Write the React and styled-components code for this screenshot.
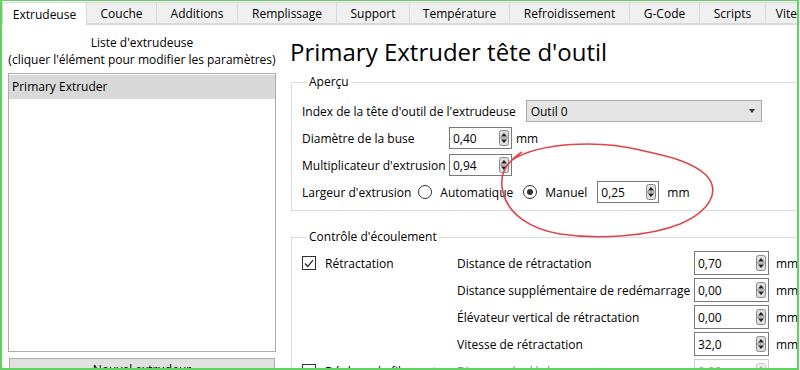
import React from 'react';
import styled, { createGlobalStyle } from 'styled-components';

const Global = createGlobalStyle`
  html, body { margin: 0; padding: 0; background: #fff; }
  body {
    font-family: "Open Sans", "Noto Sans", sans-serif;
    font-size: 12px;
    color: #000;
  }
  * { box-sizing: border-box; }
`;

const Frame = styled.div`
  position: relative;
  width: 799px;
  height: 370px;
  border: 2px solid #5ed45e;
  border-top-width: 1px;
  overflow: hidden;
  background: #fff;
  display: flex;
  flex-direction: column;
`;

const TabBar = styled.div`
  display: flex;
  align-items: flex-end;
  height: 24px;
  padding-top: 2px;
  border-bottom: 1px solid #d9d9d9;
  flex: none;
`;

const Tab = styled.div`
  flex: none;
  width: ${p => p.$w}px;
  height: ${p => (p.$active ? 23 : 22)}px;
  margin-bottom: ${p => (p.$active ? -1 : 0)}px;
  display: flex;
  align-items: center;
  justify-content: center;
  white-space: nowrap;
  overflow: hidden;
  background: ${p => (p.$active ? '#fff' : '#f0f0f0')};
  border: 1px solid #d9d9d9;
  border-left: ${p => (p.$first ? '1px solid #d9d9d9' : 'none')};
  border-bottom: ${p => (p.$active ? 'none' : '1px solid #d9d9d9')};
  color: #000;
  padding-top: 1px;
`;

const Body = styled.div`
  flex: 1;
  display: flex;
  padding-left: 6px;
  min-height: 0;
`;

const LeftPanel = styled.div`
  width: 268px;
  flex: none;
  display: flex;
  flex-direction: column;
  padding-top: 9px;
`;

const ListTitle = styled.div`
  text-align: center;
  line-height: 17px;
  white-space: nowrap;
`;

const ListBox = styled.div`
  margin-top: 5px;
  height: 279px;
  border: 1px solid #adadad;
  padding: 1px 0 0 0;
  flex: none;
`;

const ListItem = styled.div`
  height: 24px;
  line-height: 24px;
  padding-left: 3px;
  background: ${p => (p.$selected ? '#d9d9d9' : 'transparent')};
`;

const PushButton = styled.div`
  margin-top: 6px;
  margin-left: 1px;
  width: 266px;
  height: 23px;
  background: #e1e1e1;
  border: 1px solid #adadad;
  text-align: center;
  line-height: 21px;
  flex: none;
`;

const RightPanel = styled.div`
  flex: 1;
  margin-left: 14px;
  margin-right: -14px;
  display: flex;
  flex-direction: column;
`;

const Title = styled.h1`
  margin: 11px 0 0 0;
  font-weight: 400;
  font-size: 24px;
  line-height: 32px;
  white-space: nowrap;
`;

const Group = styled.fieldset`
  margin: ${p => p.$mt}px 0 0 1px;
  border: 1px solid #dcdcdc;
  padding: ${p => p.$pt}px 10px ${p => p.$pb}px 10px;
  min-width: 0;
`;

const Legend = styled.legend`
  padding: 0 2px;
  margin-left: 5px;
  line-height: 16px;
`;

const FormRows = styled.div`
  display: flex;
  flex-direction: column;
  gap: 5px;
`;

const Row = styled.div`
  display: flex;
  align-items: center;
  height: 22px;
  white-space: nowrap;
`;

const Label = styled.span`
  width: ${p => (p.$w ? `${p.$w}px` : 'auto')};
  flex: none;
  white-space: nowrap;
  color: ${p => (p.$muted ? '#888' : '#000')};
`;

const Combo = styled.div`
  width: 236px;
  height: 22px;
  background: #e5e5e5;
  border: 1px solid #acacac;
  display: flex;
  align-items: center;
  justify-content: space-between;
  padding: 0 6px 0 4px;
  margin-left: 10px;
`;

const SpinWrap = styled.div`
  width: ${p => p.$w}px;
  height: ${p => p.$h}px;
  margin-left: ${p => p.$ml || 0}px;
  border: 1px solid ${p => (p.$disabled ? '#cfcfcf' : '#7a7a7a')};
  background: #fff;
  display: flex;
  align-items: center;
  justify-content: space-between;
  padding: 0 2px 0 3px;
  flex: none;
  color: ${p => (p.$disabled ? '#9a9a9a' : '#000')};
`;

const Unit = styled.span`
  margin-left: ${p => p.$ml || 6}px;
  flex: none;
`;

const RadioCircle = styled.span`
  width: 14px;
  height: 14px;
  border-radius: 50%;
  border: 1px solid #333;
  display: inline-flex;
  align-items: center;
  justify-content: center;
  flex: none;
  &::after {
    content: '';
    width: 6px;
    height: 6px;
    border-radius: 50%;
    background: ${p => (p.$checked ? '#333' : 'transparent')};
  }
`;

const RadioOption = styled.span`
  display: inline-flex;
  align-items: center;
  gap: 8px;
  margin-left: ${p => p.$ml}px;
`;

const FlowGrid = styled.div`
  display: grid;
  grid-template-columns: 155px 237px 75px auto;
  row-gap: 3px;
  align-items: center;
`;

const CheckCell = styled.div`
  display: flex;
  align-items: center;
  gap: 9px;
  height: 24px;
`;

const CheckBox = styled.span`
  width: 14px;
  height: 14px;
  border: 1px solid #333;
  display: inline-flex;
  align-items: center;
  justify-content: center;
  flex: none;
  background: #fff;
`;

const Annotation = styled.svg`
  position: absolute;
  left: -2px;
  top: -1px;
  width: 800px;
  height: 370px;
  pointer-events: none;
`;

const SpinArrows = ({ disabled }) => (
  <svg width="10" height="16" viewBox="0 0 10 16">
    <rect x="0.5" y="0.5" width="9" height="15" rx="2" fill={disabled ? '#f0f0f0' : '#dedede'} stroke={disabled ? '#c8c8c8' : '#8a8a8a'} />
    <line x1="1" y1="8" x2="9" y2="8" stroke={disabled ? '#c8c8c8' : '#8a8a8a'} />
    <path d="M5 3 L8 6.5 L2 6.5 Z" fill={disabled ? '#aaa' : '#222'} />
    <path d="M5 13 L8 9.5 L2 9.5 Z" fill={disabled ? '#aaa' : '#222'} />
  </svg>
);

const Spin = ({ value, w = 64, h = 22, ml, disabled }) => (
  <SpinWrap $w={w} $h={h} $ml={ml} $disabled={disabled}>
    <span>{value}</span>
    <SpinArrows disabled={disabled} />
  </SpinWrap>
);

const tabs = [
  ['Extrudeuse', 85],
  ['Couche', 70],
  ['Additions', 81],
  ['Remplissage', 99],
  ['Support', 73],
  ['Température', 100],
  ['Refroidissement', 120],
  ['G-Code', 70],
  ['Scripts', 66],
  ['Vitesse', 60],
];

const flowRows = [
  { check: 'Rétractation', checked: true, label: 'Distance de rétractation', value: '0,70' },
  { label: 'Distance supplémentaire de redémarrage', value: '0,00' },
  { label: 'Élévateur vertical de rétractation', value: '0,00' },
  { label: 'Vitesse de rétractation', value: '32,0' },
  { check: 'Déplacer le filament', checked: false, label: 'Distance de déplacement', value: '0,00', disabled: true },
];

export default function App() {
  return (
    <>
      <Global />
      <Frame>
        <TabBar>
          {tabs.map(([t, w], i) => (
            <Tab key={t} $w={w} $active={i === 0} $first={i === 0}>{t}</Tab>
          ))}
        </TabBar>
        <Body>
          <LeftPanel>
            <ListTitle>Liste d'extrudeuse<br />(cliquer l'élément pour modifier les paramètres)</ListTitle>
            <ListBox>
              <ListItem $selected>Primary Extruder</ListItem>
            </ListBox>
            <PushButton>Nouvel extrudeur</PushButton>
          </LeftPanel>
          <RightPanel>
            <Title>Primary Extruder tête d'outil</Title>
            <Group $mt={6} $pt={10} $pb={7}>
              <Legend>Aperçu</Legend>
              <FormRows>
                <Row>
                  <Label>Index de la tête d'outil de l'extrudeuse</Label>
                  <Combo>
                    <span>Outil 0</span>
                    <svg width="6" height="4" viewBox="0 0 6 4"><path d="M0 0 L6 0 L3 4 Z" fill="#333" /></svg>
                  </Combo>
                </Row>
                <Row>
                  <Label $w={147}>Diamètre de la buse</Label>
                  <Spin value="0,40" w={63} />
                  <Unit $ml={4}>mm</Unit>
                </Row>
                <Row>
                  <Label $w={147}>Multiplicateur d'extrusion</Label>
                  <Spin value="0,94" w={63} />
                </Row>
                <Row>
                  <Label>Largeur d'extrusion</Label>
                  <RadioOption $ml={7}><RadioCircle /><span>Automatique</span></RadioOption>
                  <RadioOption $ml={10}><RadioCircle $checked /><span>Manuel</span></RadioOption>
                  <Spin value="0,25" w={62} ml={10} />
                  <Unit $ml={8}>mm</Unit>
                </Row>
              </FormRows>
            </Group>
            <Group $mt={18} $pt={6} $pb={8}>
              <Legend>Contrôle d'écoulement</Legend>
              <FlowGrid>
                {flowRows.map((r, i) => (
                  <React.Fragment key={i}>
                    <CheckCell>
                      {r.check && (
                        <>
                          <CheckBox>
                            {r.checked && (
                              <svg width="10" height="9" viewBox="0 0 10 9">
                                <path d="M1 4.5 L3.8 7.5 L9 1.2" fill="none" stroke="#222" strokeWidth="1.2" />
                              </svg>
                            )}
                          </CheckBox>
                          <span>{r.check}</span>
                        </>
                      )}
                    </CheckCell>
                    <Label $muted={r.disabled}>{r.label}</Label>
                    <Spin value={r.value} w={75} h={24} disabled={r.disabled} />
                    <Unit $ml={7}>mm</Unit>
                  </React.Fragment>
                ))}
              </FlowGrid>
            </Group>
          </RightPanel>
        </Body>
        <Annotation viewBox="0 0 800 370">
          <path
            d="M512 160 C 540 142, 600 140, 640 150 C 665 156, 690 160, 706 175 C 722 192, 708 212, 680 224 C 650 236, 600 240, 560 234 C 530 229, 508 214, 503 192 C 499 176, 504 164, 522 152"
            fill="none"
            stroke="#e0444a"
            strokeWidth="1.6"
          />
        </Annotation>
      </Frame>
    </>
  );
}
